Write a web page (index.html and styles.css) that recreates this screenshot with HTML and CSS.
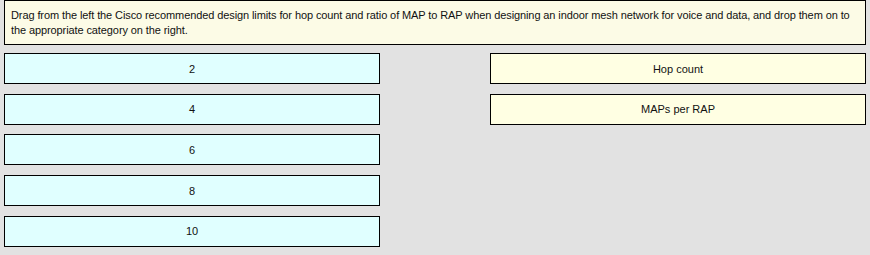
FILE: index.html
```html
<!DOCTYPE html>
<html lang="en">
<head>
    <meta charset="UTF-8">
    <title>Drag and Drop</title>
    <link rel="stylesheet" href="styles.css">
</head>
<body>

    <div class="question">
        Drag from the left the Cisco recommended design limits for hop count and ratio of MAP to RAP when designing an indoor mesh network for voice and data, and drop them on to the appropriate category on the right.
    </div>

    <div class="board">
        <div class="column">
            <div class="item">2</div>
            <div class="item">4</div>
            <div class="item">6</div>
            <div class="item">8</div>
            <div class="item">10</div>
        </div>
        <div class="column">
            <div class="target">Hop count</div>
            <div class="target">MAPs per RAP</div>
        </div>
    </div>

</body>
</html>
```

FILE: styles.css
```css
body {
    margin: 0;
    padding: 0;
    background-color: #e2e2e2;
    font-family: "Liberation Sans", Arial, sans-serif;
    font-size: 11px;
    color: #111;
}

.question {
    margin: 0 4px;
    height: 43px;
    padding: 0 4px 0 6px;
    background-color: #fcfbe6;
    border: 1px solid #000;
    line-height: 15px;
    letter-spacing: -0.1px;
    display: flex;
    align-items: center;
}

.board {
    display: flex;
    justify-content: space-between;
    padding: 8px 4px 0 4px;
}

.column {
    width: 376px;
    display: flex;
    flex-direction: column;
    gap: 9.7px;
}

.item,
.target {
    height: 29px;
    border: 1px solid #000;
    display: flex;
    justify-content: center;
    align-items: center;
}

.item {
    background-color: #e0ffff;
}

.target {
    background-color: #ffffe3;
}
```
